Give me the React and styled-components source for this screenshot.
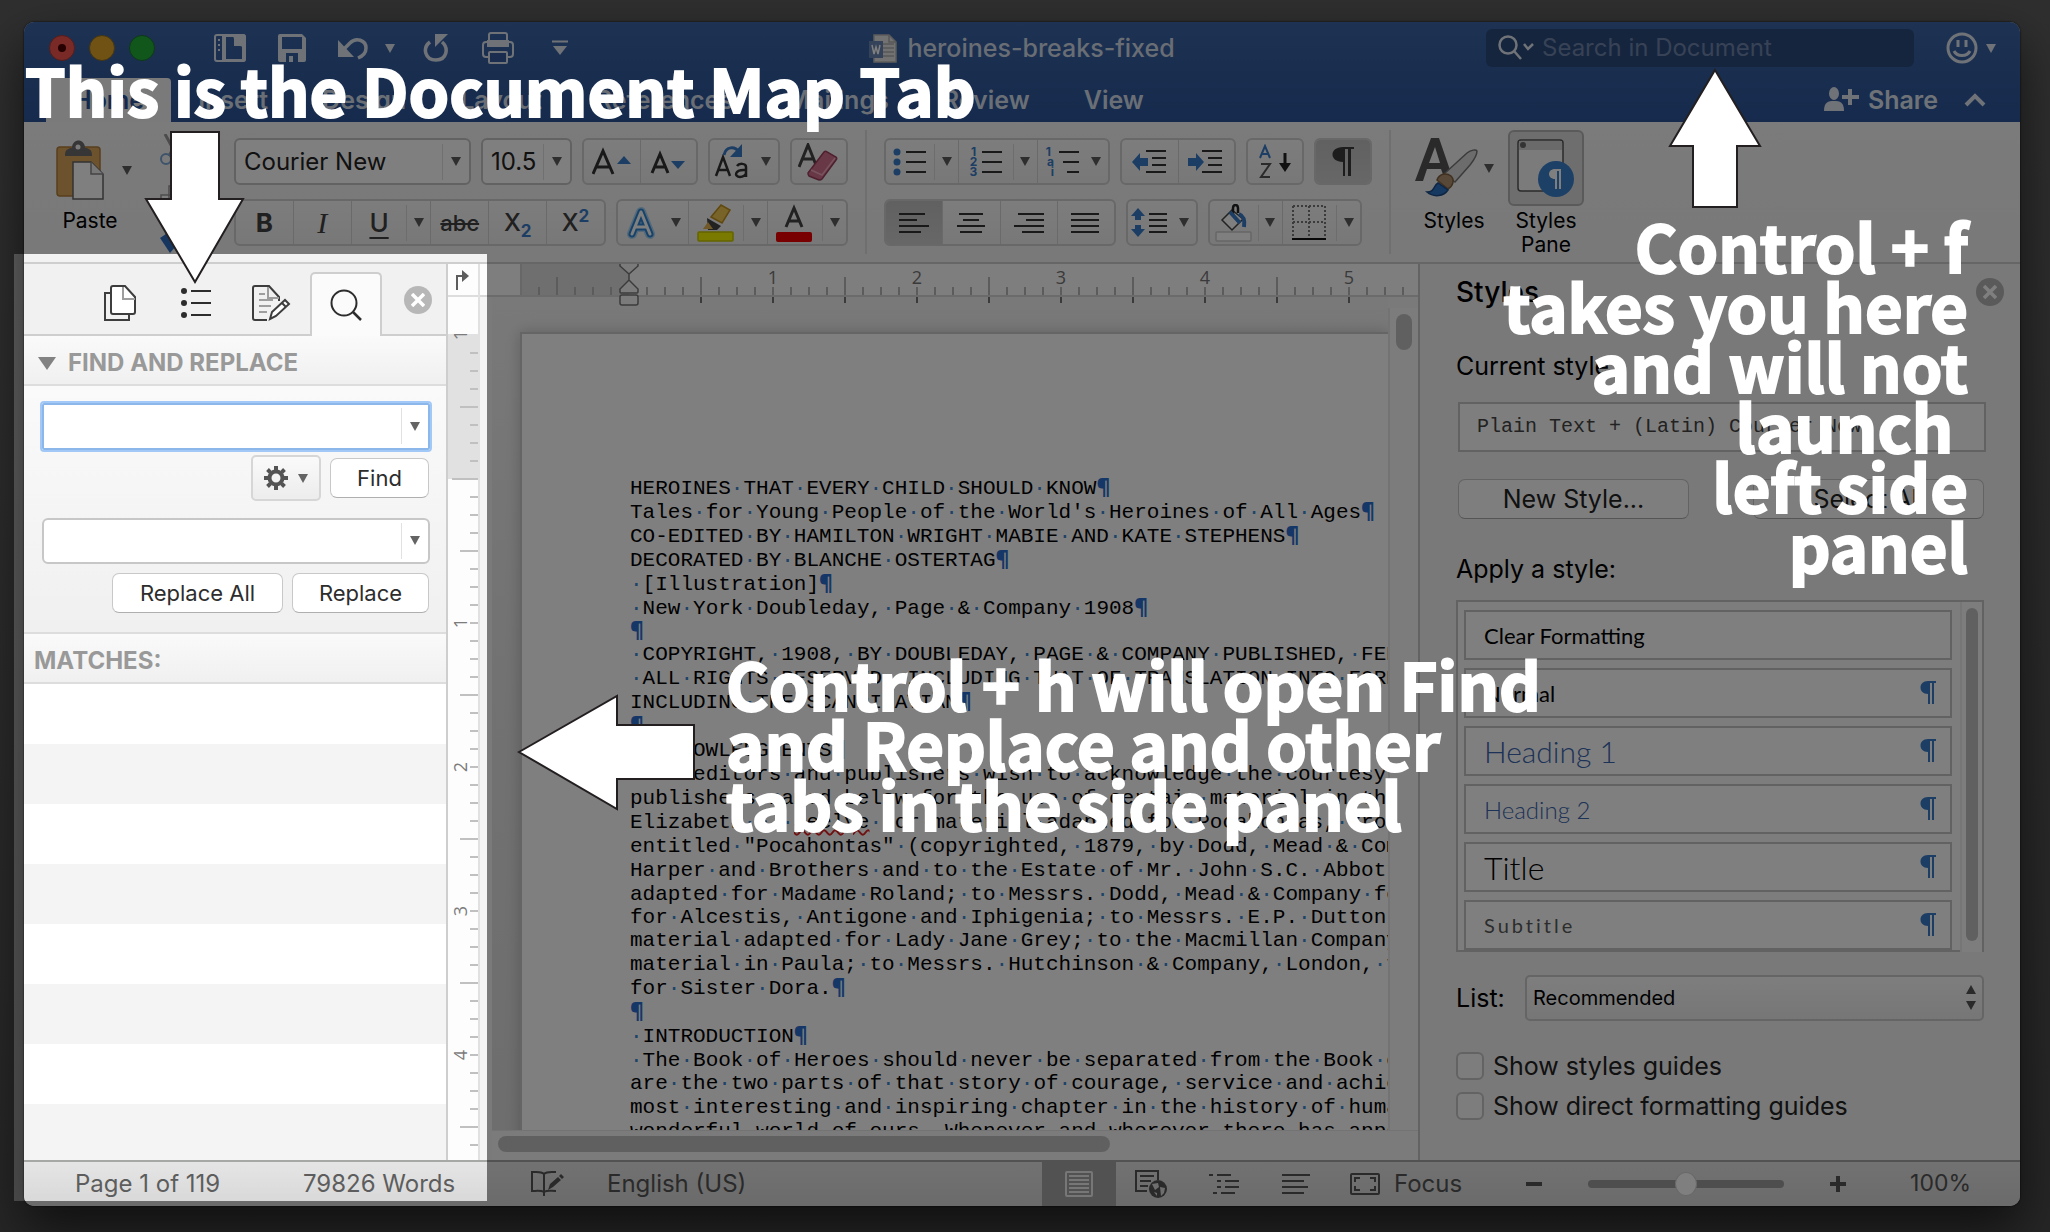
import React from "react";
import styled, { createGlobalStyle, css } from "styled-components";

const ui = `Inter, "Liberation Sans", Arial, sans-serif`;
const mono = `"Liberation Mono", "Courier New", monospace`;
const calibri = `Lato, Calibri, sans-serif`;
const myriad = `"Noto Sans CJK SC", "Myriad Pro", sans-serif`;

const GlobalStyle = createGlobalStyle`
  * { box-sizing: border-box; }
  body { margin: 0; background: #5c5c5c; font-family: ${ui}; }
  button, input, select { font: inherit; color: inherit; margin: 0; padding: 0; border: 0; background: none; }
  input, select { outline: none; min-width: 0; }
  h2, h3, p, ul, ol { margin: 0; padding: 0; font: inherit; list-style: none; }
  svg { display: block; flex: none; }
`;

const Stage = styled.div`
  position: relative;
  display: flex;
  height: 100vh;
  padding: 22px 30px 26px 24px;
  overflow: hidden;
  background: linear-gradient(#5e5e5e, #4c4c4c);
`;

const Window = styled.div`
  flex: 1;
  min-width: 0;
  display: flex;
  flex-direction: column;
  isolation: isolate;
  border-radius: 10px;
  overflow: hidden;
  background: #f4f4f4;
  box-shadow: 0 0 2px #000, 0 22px 50px rgba(0, 0, 0, 0.6);
`;

/* ---------- title bar and tabs ---------- */

const Header = styled.header`
  background: linear-gradient(#3c64a6, #2b5599);
  color: #dfe6f1;
`;

const TitleBar = styled.div`
  display: grid;
  grid-template-columns: 1fr auto 1fr;
  align-items: center;
  height: 52px;
`;

const Quick = styled.div`
  display: flex;
  align-items: center;
  padding-left: 25px;
`;

const Light = styled.button`
  display: grid;
  place-items: center;
  width: 26px;
  height: 26px;
  margin-right: 14px;
  border-radius: 50%;
  border: 1px solid ${(p) => p.$edge};
  background: ${(p) => p.$fill};
`;

const LightDot = styled.span`
  width: 8px;
  height: 8px;
  border-radius: 50%;
  background: #4c0002;
`;

const QuickButton = styled.button`
  display: grid;
  place-items: center;
  width: 36px;
  height: 36px;
  margin-left: ${(p) => p.$gap}px;
`;

const Caret = styled.span`
  display: inline-block;
  border: ${(p) => p.$size || 5}px solid transparent;
  border-top: ${(p) => (p.$size || 5) + 4}px solid ${(p) => p.$color || "#5c5c5c"};
  border-bottom: 0;
`;

const Title = styled.div`
  display: flex;
  align-items: center;
  gap: 10px;
  font-size: 25px;
  line-height: 32px;
  font-weight: 500;
  color: #d2dae8;
`;

const Right = styled.div`
  display: flex;
  align-items: center;
  justify-content: flex-end;
  gap: 8px;
  padding-right: 24px;
`;

const SearchField = styled.label`
  display: flex;
  align-items: center;
  gap: 8px;
  width: 428px;
  height: 38px;
  margin-right: 24px;
  padding: 0 12px;
  border-radius: 6px;
  background: #2c4a7c;

  input { flex: 1; font-size: 24px; line-height: 30px; }
  input::placeholder { color: #6f85ac; opacity: 1; }
`;

const PlainButton = styled.button`
  display: flex;
  align-items: center;
  gap: 8px;
`;

const TabBar = styled.nav`
  display: flex;
  align-items: flex-end;
  height: 48px;
  padding-left: 22px;
`;

const Tab = styled.button`
  height: 44px;
  padding: 0 27px;
  border-radius: 4px 4px 0 0;
  font-size: 25px;
  line-height: 30px;
  font-weight: 600;
  color: ${(p) => (p.$on ? "#2b5599" : "#d5deec")};
  background: ${(p) => (p.$on ? "#f4f4f4" : "none")};
`;

const ShareGroup = styled.div`
  display: flex;
  align-items: center;
  gap: 26px;
  height: 44px;
  margin-left: auto;
  padding-right: 34px;
  font-size: 25px;
  line-height: 30px;
  font-weight: 600;
`;

/* ---------- ribbon ---------- */

const Ribbon = styled.div`
  display: flex;
  height: 142px;
  border-bottom: 2px solid #cccccc;
  background: linear-gradient(#f6f6f6, #f2f2f2);
`;

const Clipboard = styled.div`
  display: flex;
  width: 210px;
  padding: 12px 0 0 24px;
`;

const ClipColumn = styled.div`
  display: flex;
  flex-direction: column;
  justify-content: space-between;
  height: 120px;
  margin-left: 28px;
`;

const BigLabel = styled.span`
  font-size: 21px;
  line-height: 24px;
  color: #000;
  text-align: center;
`;

const BigButton = styled.button`
  display: flex;
  flex-direction: column;
  align-items: center;
  gap: 3px;
  width: ${(p) => p.$width}px;
`;

const BigArt = styled.span`
  display: flex;
  align-items: center;
  justify-content: center;
  gap: 5px;
  width: 76px;
  height: 76px;
  border-radius: 6px;
  ${(p) => p.$on && css`background: #dcdcdc; border: 2px solid #b4b4b4;`}
`;

const PasteArt = styled.span`
  display: flex;
  align-items: center;
  gap: 18px;
  height: 72px;
  margin-left: 8px;
`;

const Rows = styled.div`
  display: flex;
  flex-direction: column;
  gap: 14px;
  padding-top: 16px;
`;

const Row = styled.div`
  display: flex;
  gap: 10px;
  height: 47px;
`;

const Tools = styled.div`
  display: flex;
  gap: 8px;
  padding-top: 8px;
`;

const Divider = styled.span`
  width: 2px;
  height: 124px;
  margin: 8px 17px 0;
  background: #dedede;
`;

const Group = styled.div`
  display: flex;
  width: ${(p) => p.$width}px;
  border: 2px solid #d0d0d0;
  border-radius: 6px;
  overflow: hidden;
  background: linear-gradient(#fafafa, #f0f0f0);
`;

const Cell = styled.button`
  flex: ${(p) => p.$grow || 58} 0 0;
  display: flex;
  align-items: center;
  color: #404040;
  background: ${(p) => (p.$on ? "linear-gradient(#c2c2c2, #cfcfcf)" : "none")};
  & + & { border-left: 1px solid #d4d4d4; }
  & > :first-child { margin-left: auto; margin-right: auto; }
`;

const CaretSlot = styled.span`
  display: grid;
  place-items: center;
  width: 24px;
  height: 36px;
  border-left: ${(p) => (p.$line ? "1px solid #dadada" : "0")};
`;

const Glyph = styled.span`
  font-family: ${(p) => p.$font || ui};
  font-size: ${(p) => p.$size || 26}px;
  line-height: 32px;
  font-weight: ${(p) => p.$weight || 500};
  font-style: ${(p) => (p.$italic ? "italic" : "normal")};
  text-decoration: ${(p) => p.$line || "none"};
  text-underline-offset: 5px;

  sub, sup { font-size: 17px; line-height: 0; font-weight: 700; color: #3a7cc8; }
`;

const Combo = styled.div`
  display: flex;
  align-items: center;
  width: ${(p) => p.$width || "100%"};
  height: 47px;
  padding-left: 8px;
  border: 2px solid #c4c4c4;
  border-radius: 6px;
  background: #fff;
  color: #222;
  ${(p) => p.$focus && css`border-color: #86b4ea; outline: 2px solid #9cc6f6; outline-offset: 0; border-radius: 2px;`}

  input { flex: 1; width: 0; font-size: 24px; line-height: 30px; }
  button { display: grid; place-items: center; width: 27px; height: 36px; border-left: 1px solid #e0e0e0; }
`;

/* ---------- side panel ---------- */

const Body = styled.main`
  display: flex;
  flex: 1;
  min-height: 0;
`;

const SidePanel = styled.aside`
  display: flex;
  flex-direction: column;
  width: 424px;
  border-right: 2px solid #cccccc;
  background: #fff;
`;

const PanelTabs = styled.div`
  display: flex;
  align-items: flex-end;
  height: 72px;
  padding-left: 58px;
  border-bottom: 2px solid #cccccc;
  background: #f1f1f1;
`;

const PanelTab = styled.button`
  display: grid;
  place-items: center;
  width: 76px;
  height: 62px;
  ${(p) => p.$on && css`
    width: 72px;
    height: 64px;
    margin-bottom: -2px;
    border: 2px solid #cccccc;
    border-bottom: 0;
    border-radius: 5px 5px 0 0;
    background: #fbfbfb;
  `}
`;

const RoundClose = styled.button`
  display: grid;
  place-items: center;
  width: 28px;
  height: 28px;
  margin: ${(p) => p.$margin};
  border-radius: 50%;
  background: #b4b4b4;
`;

const SectionHead = styled.h2`
  display: flex;
  align-items: center;
  gap: 12px;
  height: 50px;
  padding: ${(p) => p.$pad};
  border-bottom: 2px solid #dcdcdc;
  background: linear-gradient(#fafafa, #f0f0f0);
  color: #949494;
  font-size: 24px;
  line-height: 30px;
  font-weight: 700;
`;

const FindForm = styled.form`
  display: flex;
  flex-direction: column;
  height: 248px;
  padding: 17px 16px 0 18px;
  border-bottom: 2px solid #dcdcdc;
  background: linear-gradient(#fafafa, #f0f0f0);
`;

const Actions = styled.div`
  display: flex;
  align-items: center;
  justify-content: flex-end;
  gap: 9px;
  height: 57px;
  padding-right: 1px;
  margin-bottom: 11px;
`;

const PushButton = styled.button`
  width: ${(p) => p.$width}px;
  height: 40px;
  border: 1px solid #c6c6c6;
  border-bottom-color: #ababab;
  border-radius: 7px;
  background: #fff;
  font-size: ${(p) => p.$size || 22}px;
  line-height: 30px;
  color: #222;
`;

const GearButton = styled.button`
  display: flex;
  align-items: center;
  justify-content: center;
  gap: 10px;
  width: 70px;
  height: 46px;
  border: 2px solid #d4d4d4;
  border-radius: 5px;
  background: linear-gradient(#fafafa, #ececec);
`;

const Matches = styled.ul`
  flex: 1;
  background: repeating-linear-gradient(#fff 0 60px, #f4f4f4 60px 120px);
`;

/* ---------- rulers ---------- */

const SideRuler = styled.div`
  display: flex;
  flex-direction: column;
  width: 32px;
  border-right: 2px solid #e0e0e0;
  background: #fdfdfd;
`;

const Corner = styled.button`
  display: grid;
  place-items: center;
  height: 33px;
  border-bottom: 2px solid #dcdcdc;
`;

const SideScale = styled.div`
  flex: 1;
  min-height: 0;
  margin-top: 37px;
  overflow: hidden;
`;

const SideTick = styled.div`
  display: flex;
  align-items: center;
  justify-content: space-between;
  height: 18px;
  padding-left: 4px;
  background: ${(p) => (p.$edge ? "linear-gradient(#e0e0e0 50%, #fdfdfd 50%)" : p.$margin ? "#e0e0e0" : "#fdfdfd")};
  &:first-child { margin-top: -8px; }
  &::after { content: ""; width: ${(p) => p.$len}px; height: 2px; margin-left: auto; background: #bdbdbd; }
`;

const SideNumber = styled.span`
  writing-mode: vertical-rl;
  transform: rotate(180deg);
  font-family: "Open Sans", ${ui};
  font-size: 18px;
  line-height: 16px;
  color: #757575;
`;

const TopRuler = styled.div`
  display: flex;
  height: 33px;
  padding-left: 40px;
  border-bottom: 2px solid #d6d6d6;
  background: #fdfdfd;
`;

const RulerStart = styled.span`
  width: 10px;
  border-left: 2px solid #cfcfcf;
  background: #dedede;
`;

const TopTick = styled.div`
  position: relative;
  flex: none;
  display: flex;
  flex-direction: column;
  align-items: center;
  justify-content: flex-end;
  width: 18px;
  background: ${(p) => (p.$edge ? "linear-gradient(90deg, #dedede 50%, #fdfdfd 50%)" : p.$margin ? "#dedede" : "none")};
  &::before { content: ""; order: 2; width: 2px; height: ${(p) => p.$len}px; background: #b8b8b8; }
  ${(p) => p.$mark && css`
    &::after { content: ""; position: absolute; top: 33px; width: 2px; height: 6px; background: #777; }
  `}
`;

const TopNumber = styled.span`
  font-family: "Open Sans", ${ui};
  font-size: 18px;
  line-height: 20px;
  color: #757575;
`;

const IndentMarker = styled.svg`
  position: absolute;
  top: 0;
  left: -1px;
  z-index: 1;
`;

/* ---------- document ---------- */

const Workspace = styled.section`
  flex: 1;
  min-width: 0;
  display: flex;
  flex-direction: column;
  overflow: hidden;
`;

const View = styled.div`
  flex: 1;
  min-height: 0;
  display: flex;
`;

const Canvas = styled.div`
  flex: 1;
  min-width: 0;
  margin-left: 12px;
  padding: 35px 0 0 28px;
  overflow: hidden;
  background: linear-gradient(#f2f2f2, #e4e4e4 400px, #dcdcdc);
`;

const Page = styled.article`
  min-height: 100%;
  padding: 143px 0 0 108px;
  border: 2px solid #cacaca;
  border-right: 0;
  background: #fff;
  box-shadow: 0 0 14px rgba(0, 0, 0, 0.2);
  font-family: ${mono};
  font-size: 21px;
  color: #000;
`;

const Line = styled.p`
  height: ${(p) => (p.$tight ? 23 : 24)}px;
  line-height: ${(p) => (p.$tight ? 23 : 24)}px;
  white-space: pre;
`;

const Dot = styled.span`
  color: #3d86d0;
`;

const Mark = styled.span`
  font-family: "Open Sans", ${ui};
  font-weight: 800;
  font-size: 21px;
  line-height: 1px;
  color: #2a6fd0;
`;

const Misspelt = styled.span`
  text-decoration: underline wavy #e02020 2px;
`;

const VScroll = styled.div`
  width: 30px;
  margin-top: 11px;
  padding: 6px 6px 0 6px;
  border-left: 2px solid #e6e6e6;
  background: #f8f8f8;
`;

const HScroll = styled.div`
  height: 30px;
  margin-left: 12px;
  padding: 5px 6px;
  border-top: 1px solid #e6e6e6;
  background: #f6f6f6;
`;

const Thumb = styled.div`
  width: ${(p) => p.$w};
  height: ${(p) => p.$h};
  border-radius: 8px;
  background: #c1c1c1;
`;

/* ---------- styles pane ---------- */

const StylesPane = styled.aside`
  display: flex;
  flex-direction: column;
  align-items: stretch;
  width: 602px;
  padding: 0 36px;
  border-left: 2px solid #c6c6c6;
  background: #f2f2f2;
  color: #000;
`;

const PaneTop = styled.div`
  display: flex;
  align-items: center;
  justify-content: space-between;
  height: 55px;
  margin-right: -20px;
  font-size: 28px;
  font-weight: 500;
`;

const PaneLabel = styled.h3`
  margin-top: ${(p) => p.$top}px;
  font-size: 25px;
  line-height: 30px;
`;

const CurrentStyle = styled.div`
  height: 50px;
  margin: 21px -2px 0 2px;
  padding-left: 17px;
  border: 2px solid #c4c4c4;
  background: #fdfdfd;
  font-family: ${mono};
  font-size: 20px;
  line-height: 46px;
  color: #444;
`;

const PaneButtons = styled.div`
  display: flex;
  justify-content: space-between;
  margin: 27px 0 0 2px;
  button { background: #fdfdfd; }
`;

const StyleBox = styled.div`
  display: flex;
  height: 352px;
  margin-top: 16px;
  border: 2px solid #c4c4c4;
  border-bottom: 0;
  background: #fbfbfb;
`;

const StyleList = styled.div`
  flex: 1;
  display: flex;
  flex-direction: column;
  gap: 8px;
  padding: 8px 8px 0 6px;
  border-bottom: 2px solid #c4c4c4;
`;

const StyleItem = styled.button`
  display: flex;
  align-items: center;
  justify-content: space-between;
  height: 50px;
  flex: none;
  padding: 0 14px 0 18px;
  border: 2px solid #c4c4c4;
  background: #fff;
  font-family: ${calibri};
  font-size: ${(p) => p.$size}px;
  font-weight: ${(p) => p.$weight || 400};
  letter-spacing: ${(p) => (p.$spaced ? "3px" : "normal")};
  color: ${(p) => p.$color || "#000"};
`;

const StyleScroll = styled.div`
  width: 22px;
  padding: 6px 4px;
  border-left: 2px solid #ececec;
`;

const ListRow = styled.div`
  display: flex;
  align-items: center;
  justify-content: space-between;
  margin-top: 23px;
  font-size: 25px;
`;

const SelectBox = styled.span`
  display: flex;
  align-items: center;
  width: 459px;
  height: 46px;
  padding: 0 6px;
  border: 2px solid #cacaca;
  border-radius: 5px;
  background: linear-gradient(#fcfcfc, #ededed);
  select { flex: 1; appearance: none; font-size: 20px; line-height: 30px; }
`;

const Check = styled.label`
  display: flex;
  align-items: center;
  gap: 9px;
  height: 28px;
  margin-top: ${(p) => p.$top}px;
  font-size: 25px;
  line-height: 28px;
  color: #222;
  input {
    appearance: none;
    width: 28px;
    height: 28px;
    border: 2px solid #c6c6c6;
    border-radius: 6px;
    background: #fbfbfb;
  }
`;

/* ---------- status bar ---------- */

const StatusBar = styled.footer`
  display: flex;
  align-items: stretch;
  height: 46px;
  border-top: 2px solid #a2a4a2;
  background: linear-gradient(#e4e4e4, #d6d6d6);
  color: #555;
  font-size: 24px;
  line-height: 42px;
`;

const StatusItem = styled.button`
  display: flex;
  align-items: center;
  gap: 14px;
  width: ${(p) => (p.$width ? p.$width + "px" : "auto")};
  padding-left: ${(p) => p.$pad || 0}px;
  white-space: nowrap;
`;

const ViewButton = styled.button`
  display: grid;
  place-items: center;
  width: ${(p) => (p.$on ? 74 : 72)}px;
  background: ${(p) => (p.$on ? "#a4a4a4" : "none")};
`;

const ZoomButton = styled.button`
  display: grid;
  place-items: center;
  width: 60px;
  margin: 0 24px;
`;

const ZoomValue = styled.span`
  width: 79px;
  margin-right: 49px;
  font-size: 23px;
  text-align: right;
`;

const Slider = styled.input`
  appearance: none;
  width: 196px;
  background: none;
  &::-webkit-slider-runnable-track { height: 8px; border-radius: 4px; background: #9c9c9c; }
  &::-webkit-slider-thumb {
    appearance: none; width: 22px; height: 24px; margin-top: -8px;
    border-radius: 50%; background: #fff; border: 1px solid #d0d0d0;
  }
`;

const Spacer = styled.span`
  flex: 1;
`;

/* ---------- annotation layer ---------- */

const Spotlight = styled.div`
  position: absolute;
  left: 14px;
  top: 254px;
  width: 473px;
  bottom: 31px;
  background: rgba(255, 255, 255, 0.05);
  box-shadow: 0 0 0 3000px rgba(0, 0, 0, 0.5);
  pointer-events: none;
`;

const Note = styled.p`
  position: absolute;
  top: ${(p) => p.$top}px;
  left: ${(p) => (p.$left ? p.$left + "px" : "auto")};
  right: ${(p) => (p.$right ? p.$right + "px" : "auto")};
  text-align: ${(p) => (p.$right ? "right" : "left")};
  font-family: ${myriad};
  font-size: 65px;
  line-height: 60px;
  font-weight: 700;
  -webkit-text-stroke: 2px #fff;
  color: #fff;
  white-space: pre;
  pointer-events: none;
`;

const Arrow = styled.svg`
  position: absolute;
  top: ${(p) => p.$top}px;
  left: ${(p) => (p.$left ? p.$left + "px" : "auto")};
  right: ${(p) => (p.$right ? p.$right + "px" : "auto")};
  fill: #fff;
  stroke: #231f20;
  stroke-width: 2;
  pointer-events: none;
`;

/* ---------- icons ---------- */

const Svg = ({ w, h, children, ...rest }) => (
  <svg width={w} height={h} viewBox={`0 0 ${w} ${h}`} fill="none" stroke="currentColor" strokeWidth="2" aria-hidden="true" {...rest}>
    {children}
  </svg>
);

const SidebarIcon = () => (
  <Svg w={32} h={28}>
    <path d="M3 1h26q2 0 2 2v22q0 2-2 2H3q-2 0-2-2V3q0-2 2-2zM9 1v26" />
    <path fill="currentColor" stroke="none" d="M9 0h21l2 2v24l-2 2H9zM12 3v22h16V12h-8V3z" fillRule="evenodd" />
    <path d="M20 3l8 9" />
    <path strokeDasharray="2 3" d="M5 5v12" />
  </Svg>
);
const SaveIcon = () => (
  <Svg w={28} h={28}>
    <path fill="currentColor" stroke="none" fillRule="evenodd" d="M2 0h22l4 4v22a2 2 0 0 1-2 2H2a2 2 0 0 1-2-2V2a2 2 0 0 1 2-2zM4 3v12h20V3zM8 19v9h3v-6h4v6h5v-9z" />
  </Svg>
);
const UndoIcon = () => (
  <Svg w={32} h={24} strokeWidth="3.500">
    <path d="M5 15L13 7C19 1 29 4 29 12c0 5-3 8-8 10" />
    <path fill="currentColor" stroke="none" d="M1 4v17h16z" />
  </Svg>
);
const RedoIcon = () => (
  <Svg w={26} h={28} strokeWidth="3.500">
    <path d="M7 8C-1 14 2 26 13 26S26 14 19 8" />
    <path fill="currentColor" stroke="none" d="M12 0h13L12 13z" />
  </Svg>
);
const PrintIcon = () => (
  <Svg w={32} h={32}>
    <rect x="7" y="1" width="18" height="12" rx="2" />
    <rect x="1" y="10" width="30" height="15" rx="3" />
    <path fill="currentColor" d="M6 9h20v5H6z" />
    <rect x="7" y="20" width="18" height="11" rx="1" fill="#345b9e" />
  </Svg>
);
const MoreIcon = () => (
  <Svg w={16} h={16}><path d="M0 1.500h16" /><path fill="currentColor" stroke="none" d="M1 6h14l-7 9z" /></Svg>
);
const WordFileIcon = () => (
  <Svg w={28} h={29} strokeWidth="1.500">
    <path fill="#e4e4e4" stroke="#b8b8b8" d="M5 1h15l7 7v20H5z" />
    <path stroke="#b0b0b0" d="M14 10h11M14 14h11M14 18h11M14 22h11M20 1v7h7" />
    <rect x="0" y="7" width="14" height="17" fill="#6b86b4" stroke="none" />
    <path stroke="#fff" d="M3 11l2 9 2-7 2 7 2-9" />
  </Svg>
);
const SmileIcon = () => (
  <Svg w={32} h={32} strokeWidth="3"><circle cx="16" cy="16" r="14" /><path d="M12 8v7M20 8v7M8 19c3 6 13 6 16 0" /></Svg>
);
const LensIcon = () => (
  <Svg w={36} h={26} strokeWidth="2.500"><circle cx="10" cy="10" r="8.500" /><path d="M16 16l7 8M26 9l4 5 5-5" /></Svg>
);
const ShareIcon = () => (
  <Svg w={36} h={26} fill="currentColor" stroke="none">
    <ellipse cx="10" cy="6.500" rx="5" ry="6.500" /><path d="M0 24c0-9 4-10 10-10s10 1 10 10z" /><path d="M18 8h6V2h4v6h7v4h-7v6h-4v-6h-6z" />
  </Svg>
);
const ClipboardIcon = () => (
  <Svg w={48} h={60} strokeWidth="1.500">
    <rect x="1" y="7" width="43" height="49" rx="3" fill="#dba45c" stroke="#b07c38" />
    <path fill="#6c6c6c" stroke="none" d="M9 15c0-5 3-7 7-7 0-10 13-10 13 0 4 0 7 2 7 7v1H9z" />
    <circle cx="22" cy="7" r="2.500" fill="#f4f4f4" stroke="none" />
    <path fill="#fff" stroke="#666" d="M17 22h18l12 12v25H17z" /><path stroke="#888" fill="#eee" d="M35 22v12h12" />
  </Svg>
);
const ScissorsIcon = () => (
  <Svg w={28} h={32}><path stroke="#999" strokeWidth="3" d="M5 0l12 22M21 0L9 22" /><circle cx="6" cy="25" r="5" stroke="#7ba7d8" /><circle cx="20" cy="25" r="5" stroke="#7ba7d8" /></Svg>
);
const CopyIcon = () => (
  <Svg w={28} h={30} strokeWidth="1.500"><path fill="#fff" stroke="#999" d="M1 10h16v18H1zM9 1h17v20H9z" /></Svg>
);
const BrushIcon = () => (
  <Svg w={28} h={20} stroke="none"><path fill="#caa06a" d="M5 0h20L14 14z" /><path fill="#2d6cc0" d="M0 4l6-4 10 12-6 7z" /></Svg>
);

const ListLines = ({ xs, color = "#333", y = 6, step = 10, widths }) =>
  widths.map((w, i) => <path key={i} stroke={color} d={`M${xs + (Array.isArray(w) ? w[0] : 0)} ${y + i * step}h${Array.isArray(w) ? w[1] : w}`} />);

const BulletsIcon = () => (
  <Svg w={34} h={30}>
    {[5, 15, 25].map((y) => <circle key={y} cx="4" cy={y} r="3.500" fill="#3a7cc8" stroke="none" />)}
    <ListLines xs={13} y={5} widths={[20, 20, 20]} />
  </Svg>
);
const NumbersBox = styled.span`
  display: flex;
  align-items: center;
  gap: 5px;
`;
const Numbers = styled.span`
  display: grid;
  font-size: 12px;
  line-height: 10px;
  font-weight: 700;
  color: #3a7cc8;
  span:nth-child(2) { padding-left: ${(p) => p.$step || 0}px; }
  span:nth-child(3) { padding-left: ${(p) => (p.$step || 0) * 2}px; }
`;
const AlignIcon = ({ widths }) => <Svg w={30} h={24}><ListLines xs={0} y={3} step={6} widths={widths} /></Svg>;
const IndentIcon = ({ flip }) => (
  <Svg w={36} h={26}>
    <path fill="#3a7cc8" stroke="none" d={flip ? "M16 13L8 4v5H0v8h8v5z" : "M0 13l8-9v5h8v8H8v5z"} />
    <path stroke="#333" d="M14 2h20M20 9h14M20 16h14M14 23h20" />
  </Svg>
);
const SpacingIcon = () => (
  <Svg w={38} h={30}><path fill="#3a7cc8" stroke="none" d="M7 0l7 8h-4v4H4V8H0zM7 29l7-8h-4v-4H4v4H0z" /><ListLines xs={18} y={6} step={6} widths={[18, 18, 18, 18]} /></Svg>
);
const EraserIcon = () => (
  <Svg w={42} h={38} strokeWidth="1.500">
    <path stroke="#444" strokeWidth="3" d="M1 24L10 2l8 20M4 16h12" />
    <path fill="#d2708c" stroke="#9c3f5c" d="M10 30L26 9c1-1 2-1 3 0l9 5c1 1 1 2 0 3L24 36c-1 1-2 1-3 1l-10-4c-1-1-1-2-1-3z" />
    <path stroke="#f0a8bc" d="M13 27l11 5L37 15" />
  </Svg>
);
const CaseIcon = () => (
  <Svg w={36} h={38}>
    <path stroke="#333" strokeWidth="2.500" d="M2 33L9 14l7 19M4 27h10" />
    <path stroke="#333" strokeWidth="2.500" d="M23 23c2-3 9-3 9 1v10M32 27c-12-1-12 7-6 7 3 0 6-2 6-4" />
    <path stroke="#3a7cc8" strokeWidth="3" d="M10 12c2-9 11-9 15-3" /><path fill="#3a7cc8" stroke="none" d="M28 1v13H16z" />
  </Svg>
);
const GrowIcon = ({ down }) => (
  <Svg w={40} h={30}>
    <path stroke="#333" strokeWidth="3" d={down ? "M4 26l8-19 8 19M7 20h10" : "M1 27L11 4l10 23M5 20h12"} />
    <path fill="#3a7cc8" stroke="none" d={down ? "M23 14h14l-7 8z" : "M25 17h14l-7-8z"} />
  </Svg>
);
const SortIcon = () => (
  <Svg w={34} h={36}>
    <path stroke="#3a7cc8" d="M2 14L7 2l5 12M4 10h6" /><path stroke="#555" d="M3 20h9L3 33h9" />
    <path stroke="#222" strokeWidth="3" d="M27 9v14" /><path fill="#222" stroke="none" d="M21 19h12l-6 9z" />
  </Svg>
);
const TextEffectIcon = () => (
  <Svg w={30} h={34} strokeLinejoin="round" strokeLinecap="round">
    <path stroke="#a8d4f4" strokeWidth="10" d="M6 28L15 6l9 22M10 21h10" />
    <path stroke="#2f86d4" strokeWidth="7" d="M6 28L15 6l9 22M10 21h10" />
    <path stroke="#fff" strokeWidth="3" d="M6 28L15 6l9 22M10 21h10" />
  </Svg>
);
const HighlightIcon = () => (
  <Svg w={38} h={38} strokeWidth="1.500">
    <path fill="#f0c850" stroke="#c09020" d="M14 13L24 1l9 5-8 13z" /><path fill="#444" stroke="none" d="M10 14l14 8-4 4h-9z" /><path fill="#e0b050" stroke="none" d="M11 18l-5 7h10z" />
    <rect x="1" y="28" width="35" height="9" rx="1" fill="#f4f400" stroke="#c8c800" />
  </Svg>
);
const FontColorIcon = () => (
  <Svg w={38} h={38}>
    <path stroke="#444" strokeWidth="3" d="M10 23l8-19 8 19M13 17h10" /><rect x="0" y="28" width="36" height="10" rx="2" fill="#f00000" stroke="none" />
  </Svg>
);
const BucketIcon = () => (
  <Svg w={38} h={38} strokeWidth="1.500">
    <path fill="#fff" stroke="#444" d="M7 16L17 6l11 9-11 11z" /><path stroke="#222" strokeWidth="2.500" d="M18 12V4c0-4 5-4 5 0v5" />
    <path stroke="#3a7cc8" strokeWidth="4" d="M15 8l10 11M24 10c5 2 6 6 5 13" /><rect x="1" y="28" width="35" height="9" rx="1" fill="#fff" stroke="#ccc" />
  </Svg>
);
const BordersIcon = () => (
  <Svg w={34} h={36}><path stroke="#777" strokeDasharray="2 2" d="M1 1h32v30M1 1v30M17 1v30M1 17h32" /><path stroke="#111" d="M0 34h34" /></Svg>
);
const StylesIcon = () => (
  <Svg w={64} h={60}>
    <path fill="#555" stroke="none" fillRule="evenodd" d="M0 43L16 0h8l11 32-6 7-3-8H12L8 43zM14 25h11L20 9z" />
    <path fill="#d8d8d8" stroke="#777" strokeWidth="1.500" d="M29 36L52 15c4-3 9-4 10-2 0 4-3 9-7 14L40 44z" />
    <path fill="#b09070" stroke="#806040" strokeWidth="1.500" d="M22 42c2-6 9-8 14-4 4 4 2 10-3 13z" />
    <path fill="#2d72c4" stroke="#1d4c88" strokeWidth="1.500" d="M12 54c8 0 6-6 11-9l10 7c-4 6-14 8-21 2z" />
  </Svg>
);
const StylesPaneIcon = () => (
  <Svg w={58} h={58} strokeWidth="1.500">
    <rect x="1" y="1" width="45" height="51" rx="3" fill="#f6f6f6" stroke="#555" /><path fill="#d4d4d4" stroke="none" d="M2 2h43v9H2z" /><circle cx="6" cy="6" r="3" fill="#666" stroke="none" />
    <circle cx="39" cy="40" r="18" fill="#3a80cc" stroke="none" />
    <path fill="#fff" stroke="none" d="M38 40c-8 0-8-10 0-10h6v20h-2V32h-2v18h-2z" />
  </Svg>
);

const PagesIcon = () => (
  <Svg w={32} h={36} stroke="#333"><path d="M7 8H1v27h24v-5" /><path fill="#fff" d="M7 3c0-1 1-2 2-2h12l10 11v15c0 1-1 2-2 2H9c-1 0-2-1-2-2z" /><path stroke="#999" d="M19 2v12h12" /></Svg>
);
const OutlineIcon = () => (
  <Svg w={30} h={30} stroke="#222">{[3, 15, 27].map((y) => <g key={y}><circle cx="3" cy={y} r="3" fill="#222" stroke="none" /><path d={`M10 ${y}h20`} /></g>)}</Svg>
);
const ReviewIcon = () => (
  <Svg w={40} h={36} stroke="#333">
    <path d="M15 35H3c-1 0-2-1-2-2V3c0-1 1-2 2-2h14l10 11v4" /><path stroke="#999" d="M16 2v11h11M7 9h6M7 15h14M7 21h12M7 27h8" /><path fill="#fff" d="M18 34l2-7 13-12 4 4-13 12zM30 18l4 4" />
  </Svg>
);
const SearchIcon = () => (
  <Svg w={32} h={32} stroke="#222"><circle cx="14" cy="14" r="12.500" /><path strokeWidth="2.500" d="M23 23l8 8" /></Svg>
);
const CrossIcon = () => <Svg w={14} h={14} stroke="#fff" strokeWidth="3.500"><path d="M1 1l12 12M13 1L1 13" /></Svg>;
const GearIcon = () => (
  <Svg w={24} h={24} stroke="#4a4a4a">
    <circle cx="12" cy="12" r="6.500" strokeWidth="4" />
    {[0, 45, 90, 135].map((a) => <path key={a} strokeWidth="4" strokeDasharray="4 16" transform={`rotate(${a} 12 12)`} d="M12 0v24" />)}
  </Svg>
);
const TabStopIcon = () => <Svg w={14} h={20} stroke="#555"><path d="M1 20V6h6" /><path fill="#555" stroke="none" d="M6 0l7 6-7 6z" /></Svg>;
const ProofIcon = () => (
  <Svg w={34} h={28}><path d="M14 22c-3-2-8-1-12-1V2c5 0 9-1 12 2 3-3 7-2 12-2M14 4v22M14 22c3-2 6-1 12-1" /><path fill="currentColor" stroke="none" d="M18 20l2-6 8-7 3 3-8 7zM29 6l2-2 3 3-2 2z" /></Svg>
);
const PrintViewIcon = () => (
  <Svg w={28} h={26} stroke="#eee"><rect x="1" y="1" width="26" height="24" rx="1" /><path d="M4 5h20M4 9h20M4 13h20M4 17h20M4 21h20" /></Svg>
);
const WebViewIcon = () => (
  <Svg w={34} h={28}>
    <path d="M12 21H1V1h22v9M5 6h14M5 11h11M5 16h8" /><circle cx="23" cy="19" r="9" fill="currentColor" stroke="none" />
    <path fill="#ddd" stroke="none" d="M17 14l6-1 1 4-4 3zM25 17l5 1-1 5-3 3zM19 22l3 1v3z" />
  </Svg>
);
const OutlineViewIcon = () => (
  <Svg w={30} h={22}><path d="M0 2h4M8 2h14M8 8h4M16 8h14M8 14h4M16 14h14M4 20h4M12 20h14" /></Svg>
);
const DraftViewIcon = () => <Svg w={28} h={22}><path d="M0 2h28M0 8h22M0 14h26M0 20h22" /></Svg>;
const FocusIcon = () => (
  <Svg w={30} h={22}><rect x="1" y="1" width="28" height="20" rx="1" /><path d="M5 9V5h5M20 5h5v4M25 13v4h-5M10 17H5v-4" /></Svg>
);

/* ---------- content ---------- */

const lines = [
  ["HEROINES THAT EVERY CHILD SHOULD KNOW", 1],
  ["Tales for Young People of the World's Heroines of All Ages", 1],
  ["CO-EDITED BY HAMILTON WRIGHT MABIE AND KATE STEPHENS", 1],
  ["DECORATED BY BLANCHE OSTERTAG", 1],
  [" [Illustration]", 1],
  [" New York Doubleday, Page & Company 1908", 1, 1],
  ["", 1, 1],
  [" COPYRIGHT, 1908, BY DOUBLEDAY, PAGE & COMPANY PUBLISHED, FEB"],
  [" ALL RIGHTS RESERVED, INCLUDING THAT OF TRANSLATION INTO FORE"],
  ["INCLUDING THE SCANDINAVIAN", 1],
  ["", 1],
  [" ACKNOWLEDGMENTS", 1],
  [" The editors and publishers wish to acknowledge the courtesy"],
  ["publishers named below for the use of certain material in th"],
  ["Elizabeth E. Seelye for material adapted for Pocahontas, from"],
  ["entitled \"Pocahontas\" (copyrighted, 1879, by Dodd, Mead & Com"],
  ["Harper and Brothers and to the Estate of Mr. John S.C. Abbott"],
  ["adapted for Madame Roland; to Messrs. Dodd, Mead & Company fo", 0, 1],
  ["for Alcestis, Antigone and Iphigenia; to Messrs. E.P. Dutton ", 0, 1],
  ["material adapted for Lady Jane Grey; to the Macmillan Company"],
  ["material in Paula; to Messrs. Hutchinson & Company, London, f"],
  ["for Sister Dora.", 1],
  ["", 1],
  [" INTRODUCTION", 1],
  [" The Book of Heroes should never be separated from the Book o", 0, 1],
  ["are the two parts of that story of courage, service and achie"],
  ["most interesting and inspiring chapter in the history of huma"],
  ["wonderful world of ours. Whenever and wherever there has appe"],
];

const DocLine = ({ text, end, tight }) => (
  <Line $tight={tight}>
    {text.split(/( )/).map((part, i) =>
      part === " " ? <Dot key={i}>·</Dot> : part === "Seelye" ? <Misspelt key={i}>{part}</Misspelt> : part
    )}
    {end ? <Mark>¶</Mark> : null}
  </Line>
);

const styleRows = [
  { name: "Clear Formatting", size: 22, plain: true },
  { name: "Normal", size: 22 },
  { name: "Heading 1", size: 30, color: "#3a64ae", weight: 300 },
  { name: "Heading 2", size: 24, color: "#3a64ae", weight: 300 },
  { name: "Title", size: 32, weight: 300 },
  { name: "Subtitle", size: 20, color: "#5a5a5a", spaced: true },
];

const StylePilcrow = () => (
  <Svg w={16} h={24} fill="#3a7cc8" stroke="none"><path d="M8 13C-2 13-2 0 8 0h8v2h-2v21h-2V2h-2v21H8z" /></Svg>
);

const Drop = ({ line }) => <CaretSlot $line={line}><Caret /></CaretSlot>;

const sideTicks = Array.from({ length: 46 }, (_, i) => i);
const topTicks = Array.from({ length: 49 }, (_, i) => i);

export default function App() {
  return (
    <>
      <GlobalStyle />
      <Stage>
        <Window>
          <Header>
            <TitleBar>
              <Quick>
                <Light aria-label="Close window" $fill="#f2554f" $edge="#a93a36"><LightDot /></Light>
                <Light aria-label="Minimize window" $fill="#e0a628" $edge="#8a6a20" />
                <Light aria-label="Zoom window" $fill="#22ae38" $edge="#1c7030" />
                <QuickButton $gap={43} aria-label="Sidebar"><SidebarIcon /></QuickButton>
                <QuickButton $gap={26} aria-label="Save"><SaveIcon /></QuickButton>
                <QuickButton $gap={25} aria-label="Undo"><UndoIcon /></QuickButton>
                <QuickButton $gap={1} aria-label="Undo history"><Caret $color="#dfe6f1" /></QuickButton>
                <QuickButton $gap={10} aria-label="Repeat"><RedoIcon /></QuickButton>
                <QuickButton $gap={26} aria-label="Print"><PrintIcon /></QuickButton>
                <QuickButton $gap={26} aria-label="Customize toolbar"><MoreIcon /></QuickButton>
              </Quick>
              <Title><WordFileIcon />heroines-breaks-fixed</Title>
              <Right>
                <SearchField>
                  <LensIcon />
                  <input aria-label="Search in Document" placeholder="Search in Document" />
                </SearchField>
                <PlainButton aria-label="Feedback"><SmileIcon /><Caret $color="#dfe6f1" /></PlainButton>
              </Right>
            </TitleBar>
            <TabBar>
              <Tab $on>Home</Tab>
              {["Insert", "Design", "Layout", "References", "Mailings", "Review", "View"].map((t) => <Tab key={t}>{t}</Tab>)}
              <ShareGroup>
                <PlainButton><ShareIcon />Share</PlainButton>
                <PlainButton aria-label="Collapse ribbon"><Svg w={22} h={14} strokeWidth="4"><path d="M2 12l9-9 9 9" /></Svg></PlainButton>
              </ShareGroup>
            </TabBar>
          </Header>

          <Ribbon>
            <Clipboard>
              <BigButton $width={84}>
                <PasteArt><ClipboardIcon /><Caret /></PasteArt>
                <BigLabel>Paste</BigLabel>
              </BigButton>
              <ClipColumn><ScissorsIcon /><CopyIcon /><BrushIcon /></ClipColumn>
            </Clipboard>
            <Rows>
              <Row>
                <Combo $width="237px"><input aria-label="Font" defaultValue="Courier New" /><button aria-label="Font list"><Caret /></button></Combo>
                <Combo $width="91px"><input aria-label="Font size" defaultValue="10.5" /><button aria-label="Size list"><Caret /></button></Combo>
                <Group $width={116}><Cell aria-label="Grow font"><GrowIcon /></Cell><Cell aria-label="Shrink font"><GrowIcon down /></Cell></Group>
                <Group $width={72}><Cell aria-label="Change case"><CaseIcon /><Drop /></Cell></Group>
                <Group $width={58}><Cell aria-label="Clear formatting"><EraserIcon /></Cell></Group>
              </Row>
              <Row>
                <Group $width={372}>
                  <Cell><Glyph $weight={700}>B</Glyph></Cell>
                  <Cell><Glyph $italic $font={`"Liberation Serif", serif`} $size={30}>I</Glyph></Cell>
                  <Cell $grow={80}><Glyph $line="underline">U</Glyph><Drop line /></Cell>
                  <Cell><Glyph $line="line-through" $size={22}>abc</Glyph></Cell>
                  <Cell><Glyph $size={24}>X<sub>2</sub></Glyph></Cell>
                  <Cell><Glyph $size={24}>X<sup>2</sup></Glyph></Cell>
                </Group>
                <Group $width={232}>
                  <Cell $grow={72} aria-label="Text effects"><TextEffectIcon /><Drop /></Cell>
                  <Cell $grow={80} aria-label="Highlight"><HighlightIcon /><Drop line /></Cell>
                  <Cell $grow={80} aria-label="Font color"><FontColorIcon /><Drop line /></Cell>
                </Group>
              </Row>
            </Rows>
            <Divider />
            <Rows>
              <Row>
                <Group $width={226}>
                  <Cell $grow={74} aria-label="Bullets"><BulletsIcon /><Drop line /></Cell>
                  <Cell $grow={80}>
                    <NumbersBox><Numbers><span>1</span><span>2</span><span>3</span></Numbers><Svg w={20} h={30}><ListLines xs={0} y={5} widths={[20, 20, 20]} /></Svg></NumbersBox>
                    <Drop line />
                  </Cell>
                  <Cell $grow={72}>
                    <NumbersBox><Numbers $step={4}><span>1</span><span>a</span><span>i</span></Numbers><Svg w={20} h={30}><ListLines xs={0} y={5} widths={[[0, 20], [4, 16], [8, 12]]} /></Svg></NumbersBox>
                    <Drop />
                  </Cell>
                </Group>
                <Group $width={116}><Cell aria-label="Decrease indent"><IndentIcon /></Cell><Cell aria-label="Increase indent"><IndentIcon flip /></Cell></Group>
                <Group $width={58}><Cell aria-label="Sort"><SortIcon /></Cell></Group>
                <Group $width={58}>
                  <Cell $on aria-label="Show formatting marks">
                    <Svg w={22} h={30} fill="#3a3a3a" stroke="none"><path d="M11 15C-3 15-3 0 11 0h11v2h-3v27h-3V2h-3v27h-2z" /></Svg>
                  </Cell>
                </Group>
              </Row>
              <Row>
                <Group $width={232}>
                  <Cell $on aria-label="Align left"><AlignIcon widths={[26, 18, 30, 22]} /></Cell>
                  <Cell aria-label="Center"><AlignIcon widths={[[3, 24], [7, 16], [1, 28], [4, 22]]} /></Cell>
                  <Cell aria-label="Align right"><AlignIcon widths={[[4, 26], [12, 18], [0, 30], [8, 22]]} /></Cell>
                  <Cell aria-label="Justify"><AlignIcon widths={[28, 28, 28, 28]} /></Cell>
                </Group>
                <Group $width={72}><Cell aria-label="Line spacing"><SpacingIcon /><Drop /></Cell></Group>
                <Group $width={154}>
                  <Cell $grow={74} aria-label="Shading"><BucketIcon /><Drop line /></Cell>
                  <Cell $grow={80} aria-label="Borders"><BordersIcon /><Drop line /></Cell>
                </Group>
              </Row>
            </Rows>
            <Divider />
            <Tools>
              <BigButton $width={92}><BigArt><StylesIcon /><Caret /></BigArt><BigLabel>Styles</BigLabel></BigButton>
              <BigButton $width={76}><BigArt $on><StylesPaneIcon /></BigArt><BigLabel>Styles<br />Pane</BigLabel></BigButton>
            </Tools>
          </Ribbon>

          <Body>
            <SidePanel>
              <PanelTabs>
                <PanelTab aria-label="Thumbnails"><PagesIcon /></PanelTab>
                <PanelTab aria-label="Document map"><OutlineIcon /></PanelTab>
                <PanelTab aria-label="Reviewing"><ReviewIcon /></PanelTab>
                <PanelTab $on aria-label="Find and replace"><SearchIcon /></PanelTab>
                <RoundClose $margin="0 0 20px 22px" aria-label="Close panel"><CrossIcon /></RoundClose>
              </PanelTabs>
              <SectionHead $pad="6px 0 0 14px"><Caret $size={9} $color="#7c7c7c" />FIND AND REPLACE</SectionHead>
              <FindForm>
                <Combo $focus><input aria-label="Find text" /><button type="button" aria-label="Recent searches"><Caret /></button></Combo>
                <Actions>
                  <GearButton type="button" aria-label="Search options"><GearIcon /><Caret /></GearButton>
                  <PushButton type="button" $width={99}>Find</PushButton>
                </Actions>
                <Combo><input aria-label="Replacement text" /><button type="button" aria-label="Recent replacements"><Caret /></button></Combo>
                <Actions>
                  <PushButton type="button" $width={171}>Replace All</PushButton>
                  <PushButton type="button" $width={137}>Replace</PushButton>
                </Actions>
              </FindForm>
              <SectionHead $pad="6px 0 0 10px">MATCHES:</SectionHead>
              <Matches />
            </SidePanel>

            <SideRuler>
              <Corner aria-label="Tab stop"><TabStopIcon /></Corner>
              <SideScale>
                {sideTicks.map((i) => (
                  <SideTick key={i} $margin={i < 8} $edge={i === 8} $len={i === 8 ? 26 : i === 0 ? 0 : i % 8 === 4 ? 18 : 8}>
                    {i % 8 === 0 && i !== 8 ? <SideNumber>{Math.abs(i / 8 - 1)}</SideNumber> : null}
                  </SideTick>
                ))}
              </SideScale>
            </SideRuler>

            <Workspace>
              <TopRuler>
                <RulerStart />
                {topTicks.map((i) => {
                  const n = i - 5;
                  return (
                    <TopTick key={i} $margin={n < 0} $edge={n === 0} $mark={n > 0 && n % 4 === 0} $len={n === 0 ? 0 : Math.abs(n % 8) === 4 ? 18 : 8}>
                      {n > 0 && n % 8 === 0 ? <TopNumber>{n / 8}</TopNumber> : null}
                      {n === 0 ? (
                        <IndentMarker width="20" height="42" fill="#f6f6f6" stroke="#777" strokeWidth="1.500">
                          <path d="M1 0v2l9 8 9-8V0M10 10v6M1 28v-3l9-9 9 9v3q0 1-1 1H2q-1 0-1-1z" /><rect x="1" y="31" width="18" height="10" rx="2" />
                        </IndentMarker>
                      ) : null}
                    </TopTick>
                  );
                })}
              </TopRuler>
              <View>
                <Canvas>
                  <Page>
                    {lines.map(([text, end, tight], i) => <DocLine key={i} text={text} end={end} tight={tight} />)}
                  </Page>
                </Canvas>
                <VScroll><Thumb $w="16px" $h="36px" /></VScroll>
              </View>
              <HScroll><Thumb $w="67%" $h="16px" /></HScroll>
            </Workspace>

            <StylesPane>
              <PaneTop><span>Styles</span><RoundClose $margin="0" aria-label="Close styles pane"><CrossIcon /></RoundClose></PaneTop>
              <PaneLabel $top={32}>Current style:</PaneLabel>
              <CurrentStyle>Plain Text + (Latin) Courier New</CurrentStyle>
              <PaneButtons>
                <PushButton $width={231} $size={25}>New Style...</PushButton>
                <PushButton $width={231} $size={25}>Select All</PushButton>
              </PaneButtons>
              <PaneLabel $top={35}>Apply a style:</PaneLabel>
              <StyleBox>
                <StyleList>
                  {styleRows.map((s) => (
                    <StyleItem key={s.name} $size={s.size} $color={s.color} $weight={s.weight} $spaced={s.spaced}>
                      {s.name}{s.plain ? null : <StylePilcrow />}
                    </StyleItem>
                  ))}
                </StyleList>
                <StyleScroll><Thumb $w="12px" $h="333px" /></StyleScroll>
              </StyleBox>
              <ListRow>
                <label htmlFor="style-list">List:</label>
                <SelectBox>
                  <select id="style-list" defaultValue="Recommended"><option>Recommended</option></select>
                  <Svg w={10} h={26} fill="#555" stroke="none"><path d="M0 9h10L5 0zM0 16h10l-5 9z" /></Svg>
                </SelectBox>
              </ListRow>
              <Check $top={31}><input type="checkbox" />Show styles guides</Check>
              <Check $top={12}><input type="checkbox" />Show direct formatting guides</Check>
            </StylesPane>
          </Body>

          <StatusBar>
            <StatusItem $width={279} $pad={51}>Page 1 of 119</StatusItem>
            <StatusItem $width={227}>79826 Words</StatusItem>
            <StatusItem $width={77} aria-label="Proofing"><ProofIcon /></StatusItem>
            <StatusItem>English (US)</StatusItem>
            <Spacer />
            <ViewButton $on aria-label="Print layout"><PrintViewIcon /></ViewButton>
            <ViewButton aria-label="Web layout"><WebViewIcon /></ViewButton>
            <ViewButton aria-label="Outline"><OutlineViewIcon /></ViewButton>
            <ViewButton aria-label="Draft"><DraftViewIcon /></ViewButton>
            <StatusItem $width={148} $pad={18}><FocusIcon />Focus</StatusItem>
            <ZoomButton aria-label="Zoom out"><Svg w={16} h={16} strokeWidth="4"><path d="M0 8h16" /></Svg></ZoomButton>
            <Slider type="range" aria-label="Zoom" min="0" max="100" defaultValue="50" />
            <ZoomButton aria-label="Zoom in"><Svg w={16} h={16} strokeWidth="4"><path d="M0 8h16M8 0v16" /></Svg></ZoomButton>
            <ZoomValue>100%</ZoomValue>
          </StatusBar>
        </Window>

        <Spotlight />
        <Note $top={59} $left={25}>This is the Document Map Tab</Note>
        <Note $top={215} $right={82}>{"Control + f\ntakes you here\nand will not\nlaunch \nleft side\npanel"}</Note>
        <Note $top={653} $left={726}>{"Control + h will open Find\nand Replace and other\ntabs in the side panel"}</Note>
        <Arrow $left={144} $top={130} width="102" height="156"><path d="M27 2h48v67h24L51 152 2 69h25z" /></Arrow>
        <Arrow $right={288} $top={66} width="94" height="144"><path d="M47 4l45 76H69v61H25V80H2z" /></Arrow>
        <Arrow $left={516} $top={692} width="180" height="120"><path d="M3 60l98-56v29h77v54h-77v30z" /></Arrow>
      </Stage>
    </>
  );
}
